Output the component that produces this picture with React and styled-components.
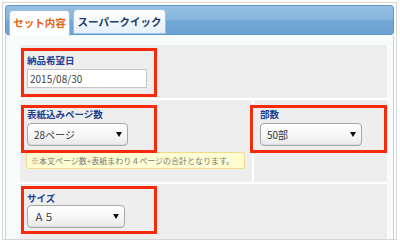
import React from 'react';
import styled, { createGlobalStyle } from 'styled-components';

const GlobalStyle = createGlobalStyle`
  html, body { margin: 0; padding: 0; background: #fff; }
  body { font-family: "Noto Sans CJK JP", "Noto Sans", sans-serif; }
`;

const Frame = styled.div`
  width: 400px;
  height: 240px;
  box-sizing: border-box;
  padding: 2px 3px 0 2px;
  overflow: hidden;
`;

const Outer = styled.div`
  height: 238px;
  box-sizing: border-box;
  border: 1px solid #d6d6d6;
  padding: 2px 2px 0 2px;
  display: flex;
  flex-direction: column;
  background: #fff;
`;

const TabBar = styled.div`
  height: 30px;
  box-sizing: border-box;
  border: 1px solid #5d99cd;
  border-radius: 3px;
  background: linear-gradient(#94bfe2 0%, #86b5dc 48%, #73a8d5 52%, #6aa2d2 100%);
  display: flex;
  align-items: flex-end;
  gap: 3px;
  padding-left: 3px;
  position: relative;
  z-index: 1;
`;

const Tab = styled.div`
  width: ${p => p.$width}px;
  height: ${p => (p.$active ? 26 : 25)}px;
  margin-bottom: ${p => (p.$active ? -2 : 0)}px;
  box-sizing: border-box;
  border: 1px solid #9dc1e0;
  border-bottom: ${p => (p.$active ? 'none' : '1px solid #9dc1e0')};
  border-radius: 4px 4px 0 0;
  background: ${p => (p.$active ? '#fff' : 'linear-gradient(#ffffff, #e5eff8)')};
  color: ${p => (p.$active ? '#e0650f' : '#1c3a6c')};
  font-size: 10.5px;
  font-weight: bold;
  display: flex;
  align-items: center;
  justify-content: center;
  padding-bottom: ${p => (p.$active ? 2 : 0)}px;
`;

const Content = styled.div`
  flex: 1;
  background: #f8fbfc;
  border-left: 1px solid #bad4ea;
  border-right: 1px solid #bad4ea;
  padding: 10px 13px 0 14px;
  display: flex;
`;

const Table = styled.div`
  flex: 1;
  display: grid;
  grid-template-columns: 232px 1fr;
  grid-template-rows: 53px 82px 1fr;
  gap: 2px;
  background: #fff;
`;

const Cell = styled.div`
  grid-column: ${p => (p.$wide ? '1 / -1' : 'auto')};
  background: #eeeeee;
  padding: ${p => p.$top}px 0 0 1px;
  display: flex;
  flex-direction: column;
  align-items: flex-start;
`;

const Field = styled.div`
  position: relative;
  z-index: 1;
  width: ${p => p.$width}px;
  box-sizing: border-box;
  border: 3px solid #f72b0b;
  padding: ${p => p.$pad};
  margin-left: ${p => p.$shift || 0}px;
  display: flex;
  flex-direction: column;
  align-items: flex-start;
  gap: ${p => p.$gap}px;
`;

const Label = styled.div`
  font-size: 9.5px;
  line-height: 12px;
  font-weight: bold;
  color: #1f3d92;
`;

const TextInput = styled.div`
  width: 120px;
  height: 19px;
  box-sizing: border-box;
  border: 1px solid #c5c5c5;
  background: #fff;
  padding-left: 2px;
  font-size: 10px;
  line-height: 17px;
  color: #444;
`;

const Select = styled.div`
  width: ${p => p.$width}px;
  height: 23px;
  box-sizing: border-box;
  border: 1px solid #a7a7a7;
  border-radius: 4px;
  background: linear-gradient(#ffffff 0%, #f7f7f7 50%, #e9e9e9 100%);
  box-shadow: inset 0 -1px 0 #dcdcdc;
  padding: 0 5px 0 6px;
  display: flex;
  align-items: center;
  justify-content: space-between;
  font-size: 10px;
  color: #333;
`;

const Arrow = styled.span`
  width: 0;
  height: 0;
  border-left: 3px solid transparent;
  border-right: 3px solid transparent;
  border-top: 5px solid #111;
`;

const Note = styled.div`
  margin: -1px 0 0 5px;
  width: 219px;
  height: 17px;
  box-sizing: border-box;
  border: 1px solid #f4d98c;
  border-radius: 3px;
  background: #fffdd2;
  padding-left: 4px;
  font-size: 8px;
  line-height: 15px;
  color: #777;
  white-space: nowrap;
`;

export default function App() {
  return (
    <>
      <GlobalStyle />
      <Frame>
        <Outer>
          <TabBar>
            <Tab $active $width={61}>セット内容</Tab>
            <Tab $width={93}>スーパークイック</Tab>
          </TabBar>
          <Content>
            <Table>
              <Cell $wide $top={3}>
                <Field $width={136} $pad="3px 8px 6px 3px" $gap={3}>
                  <Label>納品希望日</Label>
                  <TextInput>2015/08/30</TextInput>
                </Field>
              </Cell>
              <Cell $top={5}>
                <Field $width={136} $pad="0 8px 4px 3px" $gap={3}>
                  <Label>表紙込みページ数</Label>
                  <Select $width={101}>28ページ<Arrow /></Select>
                </Field>
                <Note>※本文ページ数+表紙まわり４ページの合計となります。</Note>
              </Cell>
              <Cell $top={5}>
                <Field $width={137} $pad="0 8px 4px 7px" $gap={3} $shift={-5}>
                  <Label>部数</Label>
                  <Select $width={102}>50部<Arrow /></Select>
                </Field>
              </Cell>
              <Cell $wide $top={2}>
                <Field $width={136} $pad="3px 8px 3px 3px" $gap={1}>
                  <Label>サイズ</Label>
                  <Select $width={98}>Ａ５<Arrow /></Select>
                </Field>
              </Cell>
            </Table>
          </Content>
        </Outer>
      </Frame>
    </>
  );
}
